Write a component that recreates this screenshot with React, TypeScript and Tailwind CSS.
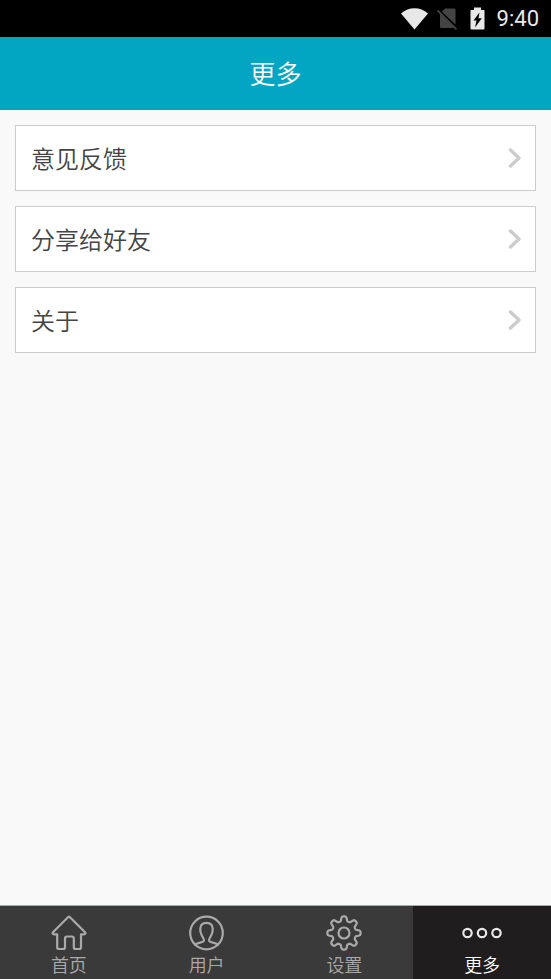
import type { ReactNode } from "react";

const rows = ["意见反馈", "分享给好友", "关于"];

function gearPath() {
  const points: string[] = [];
  for (let i = 0; i < 192; i++) {
    const a = (i / 192) * Math.PI * 2;
    const wave = Math.tanh(2 * Math.cos(8 * a)) / Math.tanh(2);
    const r = 14.3 + 2.3 * wave;
    points.push(`${(18 + r * Math.cos(a)).toFixed(2)} ${(18 + r * Math.sin(a)).toFixed(2)}`);
  }
  return `M${points.join("L")}Z`;
}

function Icon({ children }: { children: ReactNode }) {
  return (
    <svg
      className="size-9"
      viewBox="0 0 36 36"
      fill="none"
      stroke="currentColor"
      strokeWidth="2.2"
      strokeLinecap="round"
      strokeLinejoin="round"
      aria-hidden="true"
    >
      {children}
    </svg>
  );
}

const tabs: { label: string; active?: boolean; icon: ReactNode }[] = [
  {
    label: "首页",
    icon: (
      <path d="M17 2.2Q18 1.3 19 2.2L34 17.2Q35.2 18.8 33.3 19.3H30V32.2Q30 34 28.2 34H24.5Q22.8 34 22.8 32.2V23.5Q22.8 21.5 20.8 21.5H16Q14 21.5 14 23.5V32.2Q14 34 12.2 34H8Q6.2 34 6.2 32.2V19.3H2.7Q0.8 18.8 2 17.2Z" />
    ),
  },
  {
    label: "用户",
    icon: (
      <>
        <circle cx="17.5" cy="18" r="16.3" />
        <path d="M6 29.6C8.3 27.9 14.3 27.6 14.9 25.6C15.3 23.8 14 22.8 12.8 20.5C11.7 18.5 11 17 11.3 13.5C11.5 9.8 13.7 7.9 17.5 7.9S23.5 9.8 23.7 13.5C24 17 23.3 18.5 22.2 20.5C21 22.8 19.7 23.8 20.1 25.6C20.7 27.6 26.7 27.9 29 29.6" />
      </>
    ),
  },
  {
    label: "设置",
    icon: (
      <>
        <path d={gearPath()} />
        <circle cx="18" cy="18" r="5.5" />
      </>
    ),
  },
  {
    label: "更多",
    active: true,
    icon: undefined,
  },
];

function StatusBar() {
  return (
    <div className="flex h-[37px] items-center justify-end bg-black pr-3 text-[#e8e8e8]">
      <svg className="mr-2 h-[22px] w-7" viewBox="0 0 28 22" aria-hidden="true">
        <path d="M0 5.5Q6 0.2 13.5 0.2T27 5.5L13.5 21.5Z" fill="currentColor" />
      </svg>
      <svg className="mr-3 h-[22px] w-[21px]" viewBox="0 0 21 22" aria-hidden="true">
        <path d="M8 0.5H17Q18.5 0.5 18.5 2V16.5L4.8 3.8ZM3 5.8L17.5 20H4.5Q3 20 3 18.5Z" fill="#444" />
        <path d="M0.5 2.5L19.5 21.3" stroke="#444" strokeWidth="1.8" />
      </svg>
      <svg className="mr-3 h-[23px] w-[15px]" viewBox="0 0 15 23" aria-hidden="true">
        <path d="M4 0.5H11V3H14Q14.5 3 14.5 4V21.5Q14.5 22.5 13.5 22.5H1.5Q0.5 22.5 0.5 21.5V4Q0.5 3 1 3H4Z" fill="currentColor" />
        <path d="M9.5 5.5L3.5 13.5H6.5L5 20.5L11.8 11.2H8.5Z" fill="#000" />
      </svg>
      <span className="font-[Roboto,sans-serif] text-[22px] leading-6 font-normal">9:40</span>
    </div>
  );
}

export default function App() {
  return (
    <div className="flex min-h-screen flex-col bg-[#f9f9f9] font-['Noto_Sans_CJK_SC',sans-serif] font-[350]">
      <StatusBar />
      <header className="flex h-[73px] items-center justify-center bg-[#02a6c2] pb-0.5">
        <h1 className="text-[26px] leading-9 font-[350] text-white">更多</h1>
      </header>
      <main className="flex flex-1 flex-col gap-[15px] p-[15px]">
        {rows.map((label) => (
          <button
            key={label}
            type="button"
            className="flex h-[66px] w-full items-center justify-between border border-[#cccccc] bg-white pr-3 pl-[15px] text-left text-2xl text-[#444444]"
          >
            <span>{label}</span>
            <svg className="h-5 w-4" viewBox="0 0 16 20" fill="none" aria-hidden="true">
              <path d="M3.5 2L12 10L3.5 18" stroke="#cccccc" strokeWidth="3.4" strokeLinecap="round" strokeLinejoin="round" />
            </svg>
          </button>
        ))}
      </main>
      <nav className="grid h-[74px] grid-cols-4 border-t border-[#a9b0aa] bg-[#3a3a3a]">
        {tabs.map((tab) => (
          <button
            key={tab.label}
            type="button"
            aria-current={tab.active ? "page" : undefined}
            className={`flex flex-col items-center pt-[9px] text-lg leading-[26px] ${
              tab.active ? "bg-[#1f1d1e] text-white" : "text-[#aaaaaa]"
            }`}
          >
            {tab.icon ? (
              <Icon>{tab.icon}</Icon>
            ) : (
              <svg className="h-9 w-10" viewBox="0 0 40 36" fill="none" stroke="#e8e8e8" strokeWidth="2.2" aria-hidden="true">
                <circle cx="5.5" cy="18" r="4.2" />
                <circle cx="20" cy="18" r="4.2" />
                <circle cx="34.5" cy="18" r="4.2" />
              </svg>
            )}
            <span>{tab.label}</span>
          </button>
        ))}
      </nav>
    </div>
  );
}
